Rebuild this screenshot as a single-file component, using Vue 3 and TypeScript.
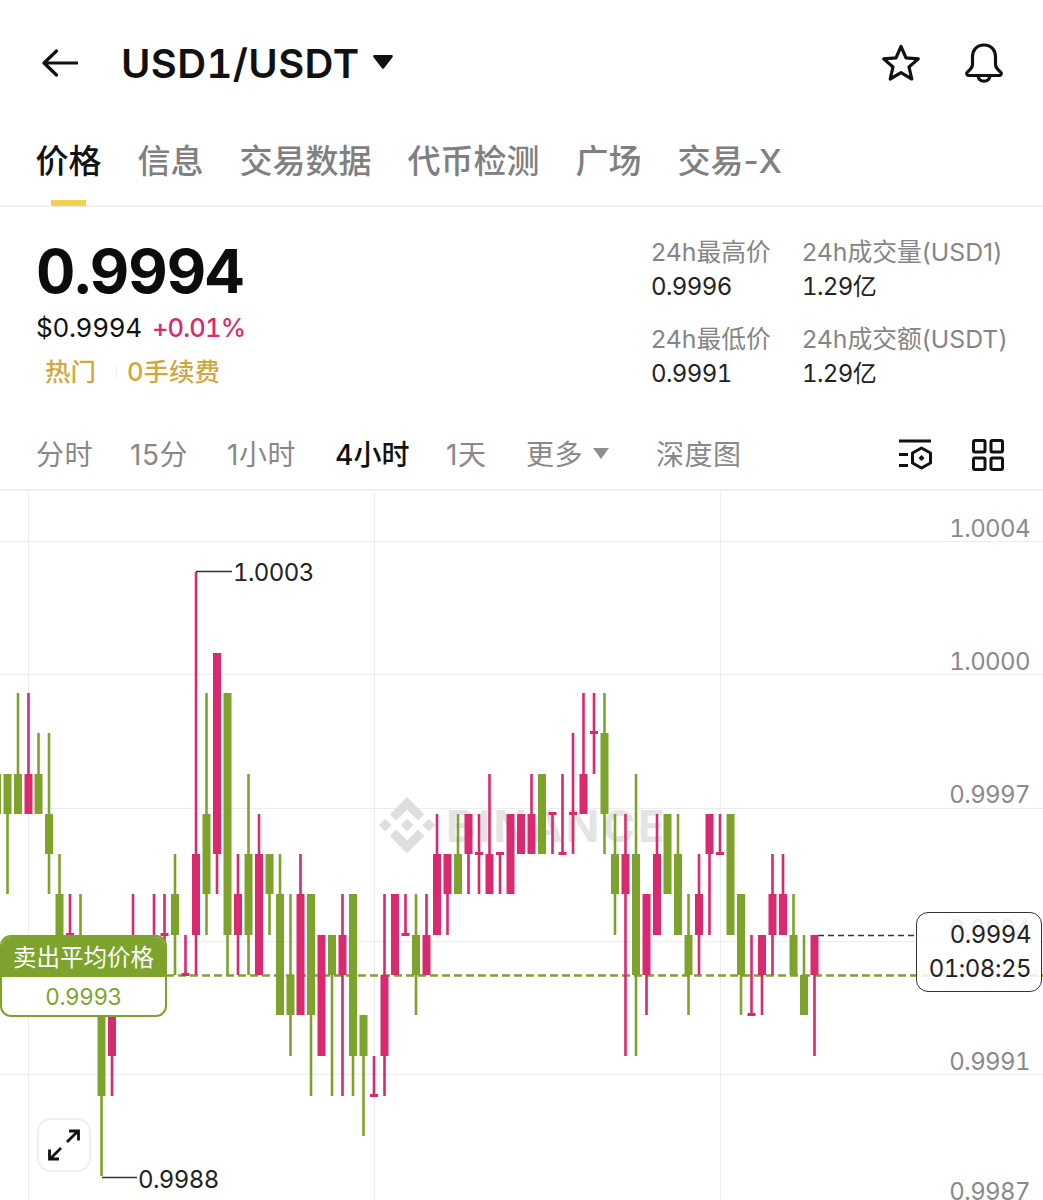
<template>
  <div class="page">
    <header class="topbar">
      <svg class="back" width="36" height="28" viewBox="0 0 36 28" fill="none" stroke="#111" stroke-width="3.2" stroke-linecap="round" stroke-linejoin="round">
        <path d="M35 14H2M14.5 2 2 14l12.5 12" />
      </svg>
      <div class="pair">USD1/USDT</div>
      <svg class="pair-caret" width="20" height="14" viewBox="0 0 20 14"><path d="M1.5 0h17c1.2 0 1.8 1.3 1 2.2L11 13.2c-.6.7-1.500.7-2 0L.5 2.200C-.3 1.300.3 0 1.500 0z" fill="#111" /></svg>
      <div class="top-icons">
        <svg width="40" height="38" viewBox="0 0 40 38" fill="none" stroke="#111" stroke-width="3.2" stroke-linejoin="round">
          <path d="M20 2.500l5 11.300 12.300 1.100-9.300 8.100 2.800 12-10.800-6.300-10.800 6.300 2.800-12-9.300-8.100L15 13.800z" />
        </svg>
        <svg width="40" height="40" viewBox="0 0 40 40" fill="none" stroke="#111" stroke-width="3.2" stroke-linejoin="round" stroke-linecap="round">
          <path d="M20 2c-7.500 0-11.500 5.500-11.500 12v7.500c0 3-2 5-5 7.500-1.500 1.300-.8 3.500 1.200 3.500h30.600c2 0 2.700-2.200 1.200-3.500-3-2.500-5-4.500-5-7.500V14C31.500 7.500 27.500 2 20 2z" />
          <path d="M14 33c.6 3.500 3 5.200 6 5.200s5.400-1.700 6-5.200" />
        </svg>
      </div>
    </header>

    <nav class="tabs">
      <div v-for="(t, i) in tabs" :key="t" class="tab" :class="{ on: i === 0 }">{{ t }}</div>
    </nav>

    <section class="summary">
      <div class="left">
        <div class="price">0.9994</div>
        <div class="sub"><span class="usd">$0.9994</span><span class="pct">+0.01%</span></div>
        <div class="tags"><span>热门</span><i></i><span>0手续费</span></div>
      </div>
      <div class="stats">
        <div v-for="s in stats" :key="s.label" class="stat">
          <div class="stat-label">{{ s.label }}</div>
          <div class="stat-value">{{ s.value }}</div>
        </div>
      </div>
    </section>

    <div class="intervals">
      <span v-for="iv in intervals" :key="iv.name" class="iv" :class="{ on: iv.on }" :style="{ width: iv.w + 'px' }">{{ iv.name }}</span>
      <svg class="more-caret" width="16" height="11" viewBox="0 0 16 11"><path d="M0 0h16l-8 11z" fill="#8f8f8f" /></svg>
      <span class="iv depth">深度图</span>
      <div class="iv-icons">
        <svg width="34" height="32" viewBox="0 0 34 32" fill="none" stroke="#111" stroke-width="3">
          <path d="M1 2h32M1 15.500h9M1 26.500h9" />
          <path d="M23.500 9l9 5v10l-9 5-9-5V14z" stroke-linejoin="round" />
          <path d="M23.500 16l3 3-3 3-3-3z" fill="#111" stroke="none" />
        </svg>
        <svg width="32" height="32" viewBox="0 0 32 32" fill="none" stroke="#111" stroke-width="3">
          <rect x="1.500" y="1.500" width="11.500" height="11.500" rx="1.500" />
          <rect x="19" y="1.500" width="11.500" height="11.500" rx="1.500" />
          <rect x="1.500" y="19" width="11.500" height="11.500" rx="1.500" />
          <rect x="19" y="19" width="11.500" height="11.500" rx="1.500" />
        </svg>
      </div>
    </div>

    <div class="chart">
      <svg class="plot" width="1043" height="709" viewBox="0 491 1043 709">
        <g stroke="#ececec" stroke-width="1">
          <line v-for="y in gridY" :key="y" x1="0" x2="1043" :y1="y + 0.5" :y2="y + 0.5" />
          <line v-for="x in gridX" :key="x" y1="491" y2="1200" :x1="x + 0.5" :x2="x + 0.5" />
        </g>

        <g fill="#dedede">
          <g transform="translate(379 797) scale(2.340)">
            <path d="M16.624 13.920l2.718 2.715-7.353 7.353-7.353-7.352 2.718-2.716 4.635 4.659 4.636-4.659zm4.637-4.637L24 12l-2.715 2.716L18.568 12l2.693-2.717zm-9.272.001l2.716 2.692-2.716 2.717v-.001L9.272 12l2.716-2.715zm-9.272-.001L5.409 12l-2.692 2.692L0 12l2.716-2.717zM11.989.012l7.353 7.329-2.718 2.715-4.635-4.635-4.636 4.659-2.717-2.715 7.353-7.353z" />
          </g>
          <text x="446" y="842" class="mark">BINANCE</text>
        </g>

        <text v-for="a in axis" :key="a.t" x="1030" :y="a.y" class="axis">{{ a.t }}</text>

        <line x1="166" x2="1043" y1="975.500" y2="975.500" stroke="#7da32c" stroke-width="2.400" stroke-dasharray="8 4" />
        <line x1="818" x2="916" y1="935.500" y2="935.500" stroke="#333" stroke-width="1.500" stroke-dasharray="6 4" />

        <g v-for="c in bars" :key="c.i" :fill="c.color">
          <rect :x="c.x - 1.3" :y="c.hy" width="2.600" :height="c.ly - c.hy" />
          <rect :x="c.x - 4" :y="c.ty" width="8" :height="c.bh" />
        </g>

        <path d="M196 571.500h36" stroke="#333" stroke-width="1.500" fill="none" />
        <text x="233" y="581" class="mark-price">1.0003</text>
        <path d="M102 1177.500h35" stroke="#333" stroke-width="1.500" fill="none" />
        <text x="138" y="1188" class="mark-price">0.9988</text>
      </svg>

      <div class="sell-tip">
        <div class="sell-head">卖出平均价格</div>
        <div class="sell-val">0.9993</div>
      </div>

      <div class="now-tag">
        <div>0.9994</div>
        <div>01:08:25</div>
      </div>

      <div class="expand">
        <svg width="34" height="34" viewBox="0 0 34 34" fill="none" stroke="#111" stroke-width="2.800">
          <path d="M20 14 31 3M22 3h9.500v9.500" />
          <path d="M14 20 3 31M12 31H2.500v-9.500" />
        </svg>
      </div>
    </div>
  </div>
</template>

<script setup lang="ts">
type Candle = [string, number, number, number, number]

const tabs = ['价格', '信息', '交易数据', '代币检测', '广场', '交易-X']

const stats = [
  { label: '24h最高价', value: '0.9996' },
  { label: '24h成交量(USD1)', value: '1.29亿' },
  { label: '24h最低价', value: '0.9991' },
  { label: '24h成交额(USDT)', value: '1.29亿' },
]

const intervals = [
  { name: '分时', w: 94 },
  { name: '15分', w: 97 },
  { name: '1小时', w: 109 },
  { name: '4小时', w: 110, on: true },
  { name: '1天', w: 80 },
  { name: '更多', w: 67 },
]

const gridY = [541, 674, 808, 941, 1074]
const gridX = [28, 374, 720]

const axis = [
  { t: '1.0004', y: 537 },
  { t: '1.0000', y: 670 },
  { t: '0.9997', y: 803 },
  { t: '0.9994', y: 937 },
  { t: '0.9991', y: 1070 },
  { t: '0.9987', y: 1200 },
]

// g = green, p = pink. high, body top, body bottom, low, in ticks from 0.9993
const raw: Candle[] = [
  ['g',5,5,4,4],['g',5,5,4,2],['g',7,5,4,4],['p',7,5,4,4],['g',6,5,4,4],['g',6,4,3,2],['g',3,2,1,1],
  ['p',2,1,1,1],['g',2,1,0,0],['g',1,1,0,0],['g',0,0,-3,-5],['p',0,0,-2,-3],['g',0,0,-1,-1],
  ['p',2,1,0,0],['g',0,0,-1,-1],['p',2,1,0,0],['p',2,1,1,0],['g',3,2,1,0],['p',1,0,0,0],
  ['p',10,3,1,0],['g',7,4,2,1],['p',8,8,3,2],['g',7,7,1,0],['p',3,2,1,0],['g',5,3,1,0],
  ['p',4,3,0,0],['g',3,3,2,1],['g',3,2,-1,-1],['g',2,0,-1,-2],['p',3,2,-1,-1],['g',2,2,-1,-3],
  ['p',1,1,-2,-2],['g',1,1,0,-3],['p',2,1,0,-3],['g',2,2,-2,-3],['g',-1,-1,-2,-4],['p',-2,-3,-3,-3],
  ['p',2,0,-2,-3],['p',2,2,0,0],['p',2,1,1,1],['g',2,1,0,-1],['p',2,1,0,0],['p',4,3,1,1],
  ['p',3,3,2,1],['g',4,3,2,2],['p',4,4,3,2],['p',4,3,3,2],['p',5,3,2,2],['p',3,3,3,2],
  ['p',4,4,2,2],['p',4,4,3,3],['p',5,4,3,3],['g',5,5,3,3],['p',4,4,4,3],['p',5,3,3,3],
  ['p',6,4,4,3],['p',7,5,4,4],['p',7,6,6,5],['g',7,6,4,3],['g',4,3,2,1],['p',4,3,2,-2],
  ['g',5,3,0,-2],['p',2,2,0,-1],['p',4,3,1,1],['g',4,4,2,2],['g',4,3,1,1],['g',2,1,0,-1],
  ['p',3,2,1,0],['p',4,4,3,1],['p',4,3,3,3],['g',4,4,1,1],['g',2,2,0,-1],['p',1,-1,-1,-1],
  ['p',1,1,0,-1],['p',3,2,1,0],['p',3,2,1,1],['g',2,1,0,0],['g',1,0,-1,-1],['p',1,1,0,-2],
]

const toY = (n: number) => Math.round(975 - 40.27 * n)

const bars = raw.map((c, idx) => {
  const i = idx - 1
  const ty = toY(c[2])
  const by = toY(c[3])
  return {
    i,
    x: Math.round((7.3 + 10.48 * i) * 2) / 2,
    color: c[0] === 'g' ? '#7da32c' : '#d92a70',
    hy: toY(c[1]),
    ly: toY(c[4]),
    ty: ty === by ? ty - 2 : ty,
    bh: ty === by ? 3 : by - ty,
  }
})
</script>

<style scoped>
.page {
  width: 1043px;
  height: 1200px;
  overflow: hidden;
  background: #fff;
  font-family: Inter, "Noto Sans CJK SC", sans-serif;
  font-variant-numeric: tabular-nums;
  color: #111;
}

.topbar {
  height: 126px;
  display: flex;
  align-items: center;
  padding-left: 42px;
  box-sizing: border-box;
}
.back { margin-right: 43px; }
.pair { font-size: 40px; font-weight: 600; letter-spacing: 0.4px; margin-right: 14px; }
.pair-caret { margin-top: -2px; }
.top-icons { margin-left: auto; margin-right: 39px; display: flex; gap: 43px; align-items: center; }

.tabs {
  height: 81px;
  display: flex;
  gap: 36px;
  padding-left: 35.500px;
  border-bottom: 2px solid #f0f0f0;
  box-sizing: border-box;
  font-variant-numeric: normal;
}
.tab {
  position: relative;
  font-size: 33px;
  line-height: 70px;
  color: #808080;
  font-weight: 500;
}
.tab.on { color: #111; }
.tab.on::after {
  content: "";
  position: absolute;
  left: 15.500px;
  bottom: -1px;
  width: 35px;
  height: 6px;
  background: #f0d24f;
}

.summary {
  height: 193px;
  display: flex;
  justify-content: space-between;
  padding: 0 36px 0 36px;
  box-sizing: border-box;
}
.price { font-size: 61px; font-weight: 700; line-height: 62px; margin-top: 33px; letter-spacing: -1px; color: #0c0c0c; }
.sub { display: flex; gap: 10px; font-size: 26px; line-height: 32px; margin-top: 10px; }
.usd { letter-spacing: -0.3px; }
.pct { color: #d92a70; font-weight: 500; font-size: 25.500px; letter-spacing: -0.8px; }
.tags { display: flex; align-items: center; color: #cfa93f; font-size: 25.500px; line-height: 34px; margin-top: 11px; padding-left: 9px; font-weight: 500; }
.tags i { width: 1px; height: 14px; background: #eee; margin: 0 10px 0 20px; }

.stats {
  display: grid;
  grid-template-columns: 151px 205px;
  grid-auto-rows: 87px;
  margin-top: 27px;
}
.stat-label { font-size: 24.800px; line-height: 36px; color: #858585; font-variant-numeric: normal; white-space: nowrap; }
.stat-value { font-size: 24px; line-height: 33px; color: #222; letter-spacing: -0.6px; }

.intervals {
  height: 91px;
  display: flex;
  align-items: center;
  padding: 16px 39px 0 36px;
  border-bottom: 2px solid #f0f0f0;
  box-sizing: border-box;
  font-size: 28px;
  color: #888;
  font-variant-numeric: normal;
  letter-spacing: 0.5px;
}
.iv { display: inline-block; flex: none; }
.iv.on { color: #111; font-weight: 500; letter-spacing: 0; margin-left: -1px; margin-right: 1px; }
.more-caret { margin-right: 47px; margin-top: 2px; margin-left: 0; }
.iv-icons { margin-left: auto; display: flex; gap: 40px; align-items: center; margin-top: 4px; }

.chart { position: relative; height: 709px; }
.plot { display: block; }
.axis { font-size: 24px; fill: #8a8a8a; text-anchor: end; letter-spacing: -0.6px; }
.mark { font-size: 44px; font-weight: 700; letter-spacing: 3px; fill: #e4e4e4; }
.mark-price { font-size: 24px; fill: #222; letter-spacing: -0.6px; }

.sell-tip {
  position: absolute;
  left: 0;
  top: 444px;
  width: 167px;
  height: 82px;
  box-sizing: border-box;
  border: 2px solid #7da32c;
  border-radius: 11px;
  background: #fff;
  overflow: hidden;
  text-align: center;
}
.sell-head { background: #7da32c; color: #fff; font-size: 23.500px; line-height: 42px; height: 40px; }
.sell-val { color: #7da32c; font-size: 22.500px; line-height: 40px; letter-spacing: -0.4px; }

.now-tag {
  position: absolute;
  left: 916px;
  top: 421px;
  width: 126px;
  height: 80px;
  box-sizing: border-box;
  border: 1.500px solid #333;
  border-radius: 12px;
  background: rgba(255, 255, 255, 0.86);
  padding: 5px 10px 0 0;
  text-align: right;
  font-size: 24px;
  line-height: 34px;
  color: #222;
  letter-spacing: -0.5px;
}

.expand {
  position: absolute;
  left: 37px;
  top: 627px;
  width: 54px;
  height: 54px;
  box-sizing: border-box;
  border: 2px solid #efefef;
  border-radius: 14px;
  background: #fff;
  display: flex;
  align-items: center;
  justify-content: center;
}
</style>

<style>
body { background: #fff; }
</style>
